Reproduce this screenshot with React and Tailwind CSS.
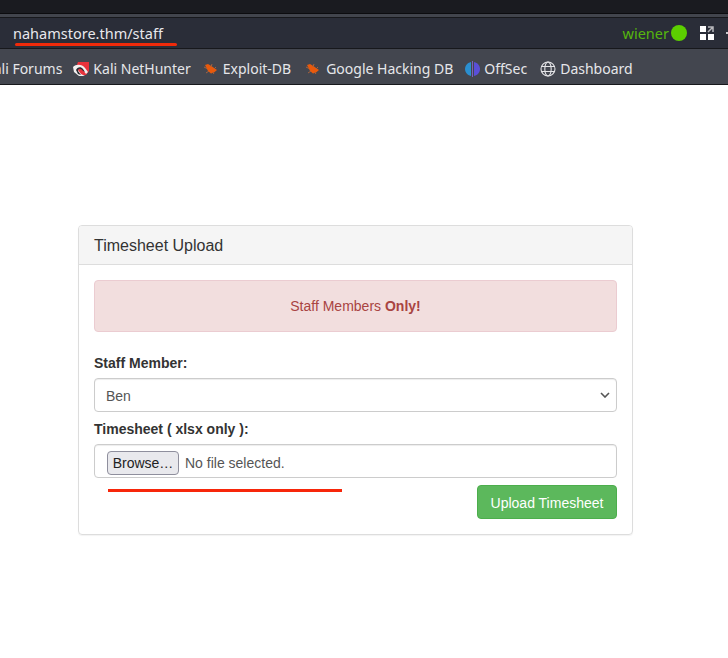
import React from "react";

const sans = "font-['Liberation_Sans',Arial,sans-serif]";
const chrome = "font-['Noto_Sans',sans-serif]";

function KaliIcon() {
  return (
    <svg width="16" height="16" viewBox="0 0 16 16">
      <path d="M5 1 H16 V10 L13 14 H6 L2 9 Z" fill="#e8323c" />
      <path d="M0 6 C3 3 9 3 12 7 L15 11 L13 13 L10 9 C8 6 5 7 5 9 L8 13 L12 15 H6 L1 11 Z" fill="#f2f0f0" />
      <path d="M3 9 C4 6 8 5 10 8 L12 11 L10 10 C8 7 5 7 5 10 L8 14 L5 13 Z" fill="#2a2a30" />
    </svg>
  );
}

function BugIcon() {
  return (
    <svg width="15" height="14" viewBox="0 0 15 14">
      <path d="M2 3 L5 2 L9 4.5 L14 8 L11 10.5 L8 11.5 L5 9 Z" fill="#e8590c" />
      <path d="M1 5 L4 6.5 M3 11 L6 9 M9 2 L8 5 M13 5 L11 7 M11 12 L9.5 10" stroke="#a8623c" strokeWidth="1" />
    </svg>
  );
}

function OffSecIcon() {
  return (
    <svg width="15" height="18" viewBox="0 0 15 18">
      <path d="M6 2 C2 3 0 6 0 9 C0 12 2 15 6 16 Z" fill="#2a8fd0" />
      <path d="M9 2 C13 3 15 6 15 9 C15 12 13 15 9 16 Z" fill="#5a4fd8" />
      <path d="M7.5 1 V17" stroke="#7a5fc0" strokeWidth="1" />
    </svg>
  );
}

function GlobeIcon() {
  return (
    <svg width="16" height="16" viewBox="0 0 16 16" fill="none" stroke="#e3e3e6" strokeWidth="1.1">
      <circle cx="8" cy="8" r="7" />
      <ellipse cx="8" cy="8" rx="3.2" ry="7" />
      <path d="M1 5.5 H15 M1 10.5 H15" />
    </svg>
  );
}

function Bookmark({ icon, label, className }) {
  return (
    <div className={`flex items-center ${className || ""}`}>
      {icon}
      <span>{label}</span>
    </div>
  );
}

export default function App() {
  return (
    <div className={`w-[728px] h-[658px] overflow-hidden bg-white ${sans}`}>
      {/* browser chrome */}
      <div className="h-[14px] bg-[#1a1b20] border-b border-[#0c0c0f]" />
      <div className="h-[3px] bg-[#42454d]" />
      <div className={`h-[32px] bg-[#2a2d38] border-y border-[#17181c] flex items-center text-[14.5px] leading-[20px] text-[#e8e8ec] ${chrome}`}>
        <span className="w-[13px] shrink-0" />
        <span className="relative">
          nahamstore.thm/staff
          <span className="absolute left-[2px] top-[20px] w-[162px] h-[3px] bg-[#f02a0a] rounded-full" />
        </span>
        <div className="ml-auto flex items-center">
          <span className="text-[#56b50e]">wiener</span>
          <span className="ml-[2px] w-[16px] h-[16px] rounded-full bg-[#5ccf00]" />
          <svg className="ml-[13px]" width="14" height="14" viewBox="0 0 14 14">
            <path d="M0 0 H6 V6 H0 Z M0 8 H6 V14 H0 Z M8 8 H14 V14 H8 Z" fill="#fff" />
            <path d="M8 1 H13 V6 M13 1 L8 6" fill="none" stroke="#b8b8bc" strokeWidth="1.5" />
          </svg>
          <span className="ml-[12px] w-[2px] h-[2px] bg-[#c8c8cc]" />
        </div>
      </div>
      <div className={`h-[36px] bg-[#43464f] border-b border-[#17181c] flex items-center pt-[4px] text-[14px] leading-[20px] text-[#e6e6ea] whitespace-nowrap ${chrome}`}>
        <span className="ml-[-15px]">Kali Forums</span>
        <Bookmark className="ml-[11px] gap-[4px]" icon={<KaliIcon />} label="Kali NetHunter" />
        <Bookmark className="ml-[12px] gap-[5px]" icon={<BugIcon />} label="Exploit-DB" />
        <Bookmark className="ml-[14px] gap-[6px]" icon={<BugIcon />} label="Google Hacking DB" />
        <Bookmark className="ml-[12px] gap-[4px]" icon={<OffSecIcon />} label="OffSec" />
        <Bookmark className="ml-[13px] gap-[4px]" icon={<GlobeIcon />} label="Dashboard" />
      </div>

      {/* page */}
      <div className="pt-[140px] pl-[78px]">
        <div className="w-[555px] h-[310px] border border-[#ddd] rounded-[4px] shadow-[0_1px_1px_rgba(0,0,0,0.05)]">
          <div className="h-[39px] bg-[#f5f5f5] border-b border-[#ddd] rounded-t-[3px] px-[15px] pt-[1px] flex items-center text-[16px] text-[#333]">
            Timesheet Upload
          </div>
          <div className="px-[15px] pt-[15px]">
            <div className="h-[52px] bg-[#f2dede] border border-[#ebccd1] rounded-[4px] flex items-center justify-center text-[14px] text-[#a94442]">
              <span>
                Staff Members <b>Only!</b>
              </span>
            </div>
            <div className="mt-[21px] h-[20px] leading-[20px] text-[14px] font-bold text-[#333]">Staff Member:</div>
            <div className="mt-[5px] h-[34px] border border-[#ccc] rounded-[4px] shadow-[inset_0_1px_1px_rgba(0,0,0,0.075)] pl-[11px] pr-[6px] flex items-center justify-between text-[14px] text-[#555]">
              <span className="pt-[2px]">Ben</span>
              <svg width="10" height="6" viewBox="0 0 10 6" fill="none" stroke="#555" strokeWidth="1.6">
                <path d="M1 1 L5 5 L9 1" />
              </svg>
            </div>
            <div className="mt-[7px] h-[20px] leading-[20px] text-[14px] font-bold text-[#333]">Timesheet ( xlsx only ):</div>
            <div className="relative mt-[5px] h-[34px] border border-[#ccc] rounded-[4px] shadow-[inset_0_1px_1px_rgba(0,0,0,0.075)] pl-[12px] pt-[6px] flex items-start text-[14px] text-[#555]">
              <span className="h-[24px] w-[72px] bg-[#e9e9ed] border border-[#8f8f9d] rounded-[4px] flex items-center justify-center text-[#222]">
                Browse…
              </span>
              <span className="ml-[6px] h-[24px] flex items-center">No file selected.</span>
              <span className="absolute left-[13px] top-[44px] w-[234px] h-[3px] bg-[#f7260a]" />
            </div>
            <div className="mt-[7px] flex justify-end">
              <span className="h-[34px] w-[140px] bg-[#5cb85c] border border-[#4cae4c] rounded-[4px] pt-[2px] flex items-center justify-center text-[14px] text-white">
                Upload Timesheet
              </span>
            </div>
          </div>
        </div>
      </div>
    </div>
  );
}
